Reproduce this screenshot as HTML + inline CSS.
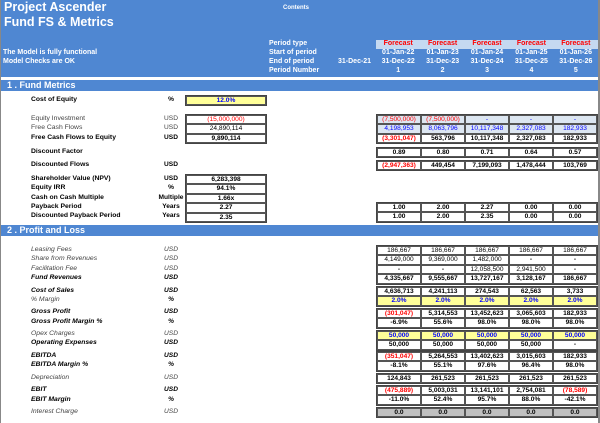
<!DOCTYPE html>
<html><head><meta charset="utf-8"><style>
*{margin:0;padding:0;box-sizing:border-box}
body{width:600px;height:423px;background:#fff;position:relative;overflow:hidden;font-family:"Liberation Sans",Arial,sans-serif;font-size:7px;font-weight:bold;color:#000}
.a{position:absolute;white-space:nowrap}
.hd{position:absolute;left:1px;top:0;width:597px;height:77px;background:#4f87d2}
.bar{position:absolute;left:1px;width:597px;height:11px;background:#4f87d2;color:#fff;font-size:9px;padding-left:6px;line-height:11px}
.w{color:#fff}
.g{position:absolute;left:376px;width:222px;border:1px solid #444}
.r{display:flex;height:9.4px}
.r div{flex:1;border:0.8px solid #555;text-align:center;line-height:8.6px;font-size:6.6px}
.lb{font-size:6.8px}
.it{font-style:italic}
.n{font-weight:normal;color:#444}
.red{color:#f00}.blu{color:#00f}
.y div{background:#ffff99;color:#00f}
.lt div{background:#dce6f1}
.gr div{background:#c0c0c0}
.bx{position:absolute;left:185px;width:82px;border:1px solid #444}
.bx div{height:9.4px;border:0.8px solid #555;text-align:center;line-height:8.6px;font-size:6.6px}
.u{position:absolute;width:40px;text-align:center;left:151px;font-size:6.6px}
</style></head><body>
<div style="position:absolute;left:0;top:0;width:1px;height:423px;background:#888"></div>
<div style="position:absolute;left:598px;top:0;width:2px;height:423px;background:#888"></div>
<div class="hd"></div>
<div class="a w" style="left:4px;top:0px;font-size:12.5px">Project Ascender</div>
<div class="a w" style="left:4px;top:15px;font-size:12.5px">Fund FS &amp; Metrics</div>
<div class="a w" style="left:283px;top:5px;font-size:6px">Contents</div>
<div class="a w" style="left:3px;top:49px">The Model is fully functional</div>
<div class="a w" style="left:3px;top:58px">Model Checks are OK</div>
<div class="a w" style="left:269px;top:40px">Period type</div>
<div class="a w" style="left:269px;top:49px">Start of period</div>
<div class="a w" style="left:269px;top:58px">End of period</div>
<div class="a w" style="left:269px;top:67px">Period Number</div>
<div class="a w" style="left:338px;top:58px">31-Dec-21</div>
<div style="position:absolute;left:376px;top:40px;width:222px;height:9px;background:#c5d9f1"></div>
<div class="a" style="left:376px;top:40px;width:222px;display:flex;color:#f00"><span style="flex:1;text-align:center">Forecast</span><span style="flex:1;text-align:center">Forecast</span><span style="flex:1;text-align:center">Forecast</span><span style="flex:1;text-align:center">Forecast</span><span style="flex:1;text-align:center">Forecast</span></div>
<div class="a w" style="left:376px;top:49px;width:222px;display:flex"><span style="flex:1;text-align:center">01-Jan-22</span><span style="flex:1;text-align:center">01-Jan-23</span><span style="flex:1;text-align:center">01-Jan-24</span><span style="flex:1;text-align:center">01-Jan-25</span><span style="flex:1;text-align:center">01-Jan-26</span></div>
<div class="a w" style="left:376px;top:58px;width:222px;display:flex"><span style="flex:1;text-align:center">31-Dec-22</span><span style="flex:1;text-align:center">31-Dec-23</span><span style="flex:1;text-align:center">31-Dec-24</span><span style="flex:1;text-align:center">31-Dec-25</span><span style="flex:1;text-align:center">31-Dec-26</span></div>
<div class="a w" style="left:376px;top:67px;width:222px;display:flex"><span style="flex:1;text-align:center">1</span><span style="flex:1;text-align:center">2</span><span style="flex:1;text-align:center">3</span><span style="flex:1;text-align:center">4</span><span style="flex:1;text-align:center">5</span></div>

<div class="bar" style="top:80px">1 . Fund Metrics</div>
<div class="a lb" style="left:31px;top:96px">Cost of Equity</div><div class="u" style="top:96px">%</div>
<div class="bx" style="top:95px;background:#ffff99"><div class="blu">12.0%</div></div>
<div class="a lb n" style="left:31px;top:115px">Equity Investment</div><div class="u n" style="top:115px">USD</div>
<div class="a lb n" style="left:31px;top:124px">Free Cash Flows</div><div class="u n" style="top:124px">USD</div>
<div class="a lb" style="left:31px;top:134px">Free Cash Flows to Equity</div><div class="u" style="top:134px">USD</div>
<div class="bx" style="top:114px"><div class="red" style="font-weight:normal">(15,000,000)</div><div style="font-weight:normal">24,890,114</div><div>9,890,114</div></div>
<div class="a lb" style="left:31px;top:148px">Discount Factor</div>
<div class="a lb" style="left:31px;top:161px">Discounted Flows</div><div class="u" style="top:161px">USD</div>
<div class="a lb" style="left:31px;top:175px">Shareholder Value (NPV)</div><div class="u" style="top:175px">USD</div>
<div class="a lb" style="left:31px;top:184px">Equity IRR</div><div class="u" style="top:184px">%</div>
<div class="a lb" style="left:31px;top:194px">Cash on Cash Multiple</div><div class="u" style="top:194px">Multiple</div>
<div class="a lb" style="left:31px;top:203px">Payback Period</div><div class="u" style="top:203px">Years</div>
<div class="a lb" style="left:31px;top:212px">Discounted Payback Period</div><div class="u" style="top:212px">Years</div>
<div class="bx" style="top:174px"><div>6,283,398</div><div>94.1%</div><div>1.66x</div><div>2.27</div><div>2.35</div></div>

<div class="g" style="top:114px">
<div class="r lt" style="font-weight:normal"><div class="red" style="font-weight:normal">(7,500,000)</div><div class="red" style="font-weight:normal">(7,500,000)</div><div class="blu">-</div><div class="blu">-</div><div class="blu">-</div></div>
<div class="r lt"><div class="blu" style="font-weight:normal">4,198,953</div><div class="blu" style="font-weight:normal">8,063,796</div><div class="blu" style="font-weight:normal">10,117,348</div><div class="blu" style="font-weight:normal">2,327,083</div><div class="blu" style="font-weight:normal">182,933</div></div>
<div class="r"><div class="red">(3,301,047)</div><div>563,796</div><div>10,117,348</div><div>2,327,083</div><div>182,933</div></div></div>
<div class="g" style="top:147px"><div class="r"><div>0.89</div><div>0.80</div><div>0.71</div><div>0.64</div><div>0.57</div></div></div>
<div class="g" style="top:160px"><div class="r"><div class="red">(2,947,363)</div><div>449,454</div><div>7,199,093</div><div>1,478,444</div><div>103,769</div></div></div>
<div class="g" style="top:202px"><div class="r"><div>1.00</div><div>2.00</div><div>2.27</div><div>0.00</div><div>0.00</div></div><div class="r"><div>1.00</div><div>2.00</div><div>2.35</div><div>0.00</div><div>0.00</div></div></div>

<div class="bar" style="top:225px">2 . Profit and Loss</div>
<div class="a lb it n" style="left:31px;top:246px">Leasing Fees</div><div class="u it n" style="top:246px">USD</div>
<div class="a lb it n" style="left:31px;top:255px">Share from Revenues</div><div class="u it n" style="top:255px">USD</div>
<div class="a lb it n" style="left:31px;top:265px">Facilitation Fee</div><div class="u it n" style="top:265px">USD</div>
<div class="a lb it" style="left:31px;top:274px">Fund Revenues</div><div class="u it" style="top:274px">USD</div>
<div class="a lb it" style="left:31px;top:287px">Cost of Sales</div><div class="u it" style="top:287px">USD</div>
<div class="a lb it n" style="left:31px;top:296px">% Margin</div><div class="u it" style="top:296px">%</div>
<div class="a lb it" style="left:31px;top:308px">Gross Profit</div><div class="u it" style="top:308px">USD</div>
<div class="a lb it" style="left:31px;top:318px">Gross Profit Margin %</div><div class="u it" style="top:318px">%</div>
<div class="a lb it n" style="left:31px;top:330px">Opex Charges</div><div class="u it n" style="top:330px">USD</div>
<div class="a lb it" style="left:31px;top:339px">Operating Expenses</div><div class="u it" style="top:339px">USD</div>
<div class="a lb it" style="left:31px;top:352px">EBITDA</div><div class="u it" style="top:352px">USD</div>
<div class="a lb it" style="left:31px;top:361px">EBITDA Margin %</div><div class="u it" style="top:361px">%</div>
<div class="a lb it n" style="left:31px;top:374px">Depreciation</div><div class="u it n" style="top:374px">USD</div>
<div class="a lb it" style="left:31px;top:386px">EBIT</div><div class="u it" style="top:386px">USD</div>
<div class="a lb it" style="left:31px;top:396px">EBIT Margin</div><div class="u it" style="top:396px">%</div>
<div class="a lb it n" style="left:31px;top:408px">Interest Charge</div><div class="u it n" style="top:408px">USD</div>

<div class="g" style="top:245px">
<div class="r" style="font-weight:normal"><div style="font-weight:normal">186,667</div><div style="font-weight:normal">186,667</div><div style="font-weight:normal">186,667</div><div style="font-weight:normal">186,667</div><div style="font-weight:normal">186,667</div></div>
<div class="r"><div style="font-weight:normal">4,149,000</div><div style="font-weight:normal">9,369,000</div><div style="font-weight:normal">1,482,000</div><div>-</div><div>-</div></div>
<div class="r"><div>-</div><div>-</div><div style="font-weight:normal">12,058,500</div><div style="font-weight:normal">2,941,500</div><div>-</div></div>
<div class="r"><div>4,335,667</div><div>9,555,667</div><div>13,727,167</div><div>3,128,167</div><div>186,667</div></div></div>
<div class="g" style="top:286px"><div class="r"><div>4,636,713</div><div>4,241,113</div><div>274,543</div><div>62,563</div><div>3,733</div></div>
<div class="r y"><div>2.0%</div><div>2.0%</div><div>2.0%</div><div>2.0%</div><div>2.0%</div></div></div>
<div class="g" style="top:308px"><div class="r"><div class="red">(301,047)</div><div>5,314,553</div><div>13,452,623</div><div>3,065,603</div><div>182,933</div></div>
<div class="r"><div>-6.9%</div><div>55.6%</div><div>98.0%</div><div>98.0%</div><div>98.0%</div></div></div>
<div class="g" style="top:330px"><div class="r y"><div>50,000</div><div>50,000</div><div>50,000</div><div>50,000</div><div>50,000</div></div>
<div class="r"><div>50,000</div><div>50,000</div><div>50,000</div><div>50,000</div><div>-</div></div></div>
<div class="g" style="top:351px"><div class="r"><div class="red">(351,047)</div><div>5,264,553</div><div>13,402,623</div><div>3,015,603</div><div>182,933</div></div>
<div class="r"><div>-8.1%</div><div>55.1%</div><div>97.6%</div><div>96.4%</div><div>98.0%</div></div></div>
<div class="g" style="top:373px"><div class="r"><div>124,843</div><div>261,523</div><div>261,523</div><div>261,523</div><div>261,523</div></div></div>
<div class="g" style="top:385px"><div class="r"><div class="red">(475,889)</div><div>5,003,031</div><div>13,141,101</div><div>2,754,081</div><div class="red">(78,589)</div></div>
<div class="r"><div>-11.0%</div><div>52.4%</div><div>95.7%</div><div>88.0%</div><div>-42.1%</div></div></div>
<div class="g" style="top:407px"><div class="r gr"><div>0.0</div><div>0.0</div><div>0.0</div><div>0.0</div><div>0.0</div></div></div>
</body></html>
